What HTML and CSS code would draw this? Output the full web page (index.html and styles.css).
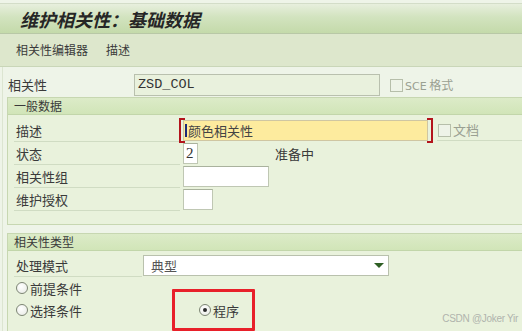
FILE: index.html
```html
<!DOCTYPE html>
<html lang="zh-CN">
<head>
  <meta charset="UTF-8">
  <meta name="viewport" content="width=device-width, initial-scale=1.0">
  <title>维护相关性：基础数据</title>
  <link rel="stylesheet" href="styles.css">
</head>
<body>
  <div class="titlebar">
    <h1 class="title">维护相关性：基础数据</h1>
  </div>

  <div class="toolbar">
    <span class="tool">相关性编辑器</span>
    <span class="tool">描述</span>
  </div>

  <div class="main">
    <div class="top-row">
      <span class="top-label">相关性</span>
      <div class="field field-readonly mono">ZSD_COL</div>
      <span class="check"></span>
      <span class="check-text"><span class="latin">SCE</span> 格式</span>
    </div>

    <!-- general data -->
    <section class="group">
      <div class="group-head">一般数据</div>
      <div class="group-body">
        <div class="row">
          <div class="row-label">描述</div>
          <div class="field field-focus"><span class="caret"></span>颜色相关性</div>
          <div class="row-tail">
            <span class="check"></span>
            <span class="check-text">文档</span>
          </div>
        </div>
        <div class="row">
          <div class="row-label">状态</div>
          <div class="field field-status mono">2</div>
          <span class="status-text">准备中</span>
        </div>
        <div class="row">
          <div class="row-label">相关性组</div>
          <div class="field field-group"></div>
        </div>
        <div class="row">
          <div class="row-label">维护授权</div>
          <div class="field field-auth"></div>
        </div>
      </div>
    </section>

    <!-- dependency type -->
    <section class="group group-type">
      <div class="group-head">相关性类型</div>
      <div class="group-body">
        <div class="row row-select">
          <div class="row-label label-short">处理模式</div>
          <div class="select">
            <span>典型</span>
            <span class="select-arrow"></span>
          </div>
        </div>
        <div class="radio-row">
          <span class="radio"></span>前提条件
        </div>
        <div class="radio-row">
          <span class="radio-cell"><span class="radio"></span>选择条件</span>
          <span class="radio-cell"><span class="radio checked"></span>程序</span>
        </div>
      </div>
    </section>
  </div>

  <div class="annotation"></div>
  <div class="watermark">CSDN @Joker Yir</div>
</body>
</html>
```

FILE: styles.css
```css
body {
  margin: 0;
  padding: 0;
  width: 522px;
  height: 331px;
  overflow: hidden;
  position: relative;
  background-color: #eef4e8;
  font-family: "Noto Sans CJK SC", "Noto Sans", sans-serif;
  font-size: 12px;
  color: #333;
}

.titlebar {
  margin-top: 3px;
  height: 29px;
  border-top: 1px solid #d3ddc8;
  border-bottom: 1px solid #b8c8a6;
  background: linear-gradient(to bottom, #e7efdd, #d2e3bf 45%, #c4daaa);
  display: flex;
  align-items: center;
  padding-left: 20px;
}

.title {
  margin: 0;
  font-size: 18px;
  font-weight: bold;
  font-style: italic;
  line-height: 1;
  color: #262626;
}

.toolbar {
  height: 32px;
  background-color: #dde7cc;
  border-bottom: 1px solid #c9d6b8;
  display: flex;
  align-items: center;
  gap: 18px;
  padding-left: 16px;
}

.tool {
  line-height: 1;
  color: #3a3a3a;
}

.main {
  margin-left: 2px;
  border-left: 1px solid #dce5d1;
}

.top-row {
  box-sizing: border-box;
  height: 30px;
  padding-top: 7px;
  display: flex;
  align-items: flex-start;
}

.top-label {
  width: 126px;
  padding-left: 5px;
  line-height: 22px;
  font-size: 13px;
  color: #3a3a3a;
}

.field {
  box-sizing: border-box;
  height: 21px;
  border: 1px solid #bfc7b3;
  border-top-color: #a9b29d;
  background-color: #fff;
  display: flex;
  align-items: center;
  padding-left: 3px;
  line-height: 1;
  color: #333;
}

.mono {
  font-family: "Liberation Mono", monospace;
  font-size: 13.5px;
}

.field-readonly {
  width: 246px;
  height: 22px;
  background-color: #e9f1dd;
  border-color: #b9c0ae;
}

.check {
  box-sizing: border-box;
  width: 13px;
  height: 13px;
  margin-top: 5px;
  margin-left: 10px;
  border: 1px solid #b6beaa;
  background-color: #eef3e8;
}

.check-text {
  margin-left: 2px;
  line-height: 22px;
  color: #9aa092;
  font-size: 12px;
}

.latin {
  font-family: "DejaVu Sans", sans-serif;
  font-size: 11px;
}

.group {
  margin-left: 4px;
  border: 1px solid #c7d7b1;
  border-right: none;
  background-color: #e9f2dc;
}

.group-head {
  height: 16px;
  background: linear-gradient(to bottom, #dcebc8, #d1e5b8);
  border-bottom: 1px solid #c2d6aa;
  padding-left: 6px;
  line-height: 16px;
  color: #3a3a3a;
}

.group-body {
  padding: 4px 0 13px 0;
}

.row {
  height: 23px;
  display: flex;
  align-items: center;
  margin-left: 6px;
}

.row-label {
  box-sizing: border-box;
  align-self: stretch;
  width: 166px;
  padding-left: 2px;
  border-bottom: 1px solid #d0dcc3;
  display: flex;
  align-items: center;
  font-size: 13px;
  color: #3a3a3a;
}

.row .field {
  margin-left: 3px;
}

.field-focus {
  position: relative;
  width: 245px;
  background-color: #fdeb9e;
  border-color: #cfc6a2;
  padding-left: 1px;
  font-size: 13px;
  color: #444;
}

.field-focus::before,
.field-focus::after {
  content: "";
  position: absolute;
  top: -3px;
  bottom: -3px;
  width: 4px;
  border: 2px solid #b3141c;
}

.field-focus::before {
  left: -5px;
  border-right: none;
}

.field-focus::after {
  right: -6px;
  border-left: none;
}

.caret {
  width: 2px;
  height: 13px;
  margin-right: 1px;
  background-color: #1c2a78;
}

.row-tail {
  box-sizing: border-box;
  align-self: stretch;
  flex: 1;
  margin-left: 9px;
  margin-bottom: 1px;
  border-bottom: 1px solid #d0dcc3;
  display: flex;
  align-items: flex-start;
}

.row-tail .check {
  margin-top: 5px;
  margin-left: 1px;
}

.row-tail .check-text {
  font-size: 13px;
}

.field-status {
  width: 15px;
  padding-left: 2px;
  font-family: "Liberation Serif", serif;
  font-size: 15px;
}

.status-text {
  margin-left: 77px;
  font-size: 13px;
  color: #3a3a3a;
}

.field-group {
  width: 86px;
}

.field-auth {
  width: 30px;
}

.group-type {
  margin-top: 8px;
  height: 97px;
  border-bottom: none;
}

.group-type .group-body {
  padding: 3px 0 0 0;
}

.label-short {
  width: 128px;
}

.select {
  box-sizing: border-box;
  width: 246px;
  height: 21px;
  margin-left: 1px;
  border: 1px solid #b9c1ad;
  background-color: #fff;
  display: flex;
  align-items: center;
  justify-content: space-between;
  padding: 0 4px 0 7px;
  font-size: 13px;
  color: #555;
}

.select-arrow {
  width: 0;
  height: 0;
  border-left: 5px solid transparent;
  border-right: 5px solid transparent;
  border-top: 5px solid #2f5f24;
}

.radio-row {
  height: 22px;
  margin-left: 8px;
  display: flex;
  align-items: center;
  font-size: 13px;
  color: #3a3a3a;
}

.radio-cell {
  display: flex;
  align-items: center;
  width: 183px;
}

.radio {
  box-sizing: border-box;
  width: 12px;
  height: 12px;
  margin-right: 2px;
  border: 1px solid #7d8574;
  border-radius: 50%;
  background: radial-gradient(circle at 40% 35%, #fff, #e6e9e2);
  position: relative;
}

.radio.checked::after {
  content: "";
  position: absolute;
  left: 3px;
  top: 3px;
  width: 4px;
  height: 4px;
  border-radius: 50%;
  background-color: #2b2b2b;
}

.annotation {
  position: absolute;
  left: 172px;
  top: 289px;
  width: 77px;
  height: 36px;
  border: 3px solid #e8202a;
  border-radius: 1px;
}

.watermark {
  position: absolute;
  right: 4px;
  bottom: 7px;
  font-family: "Liberation Sans", Arial, sans-serif;
  font-size: 10px;
  letter-spacing: -0.3px;
  color: #b0b4ad;
}
```
